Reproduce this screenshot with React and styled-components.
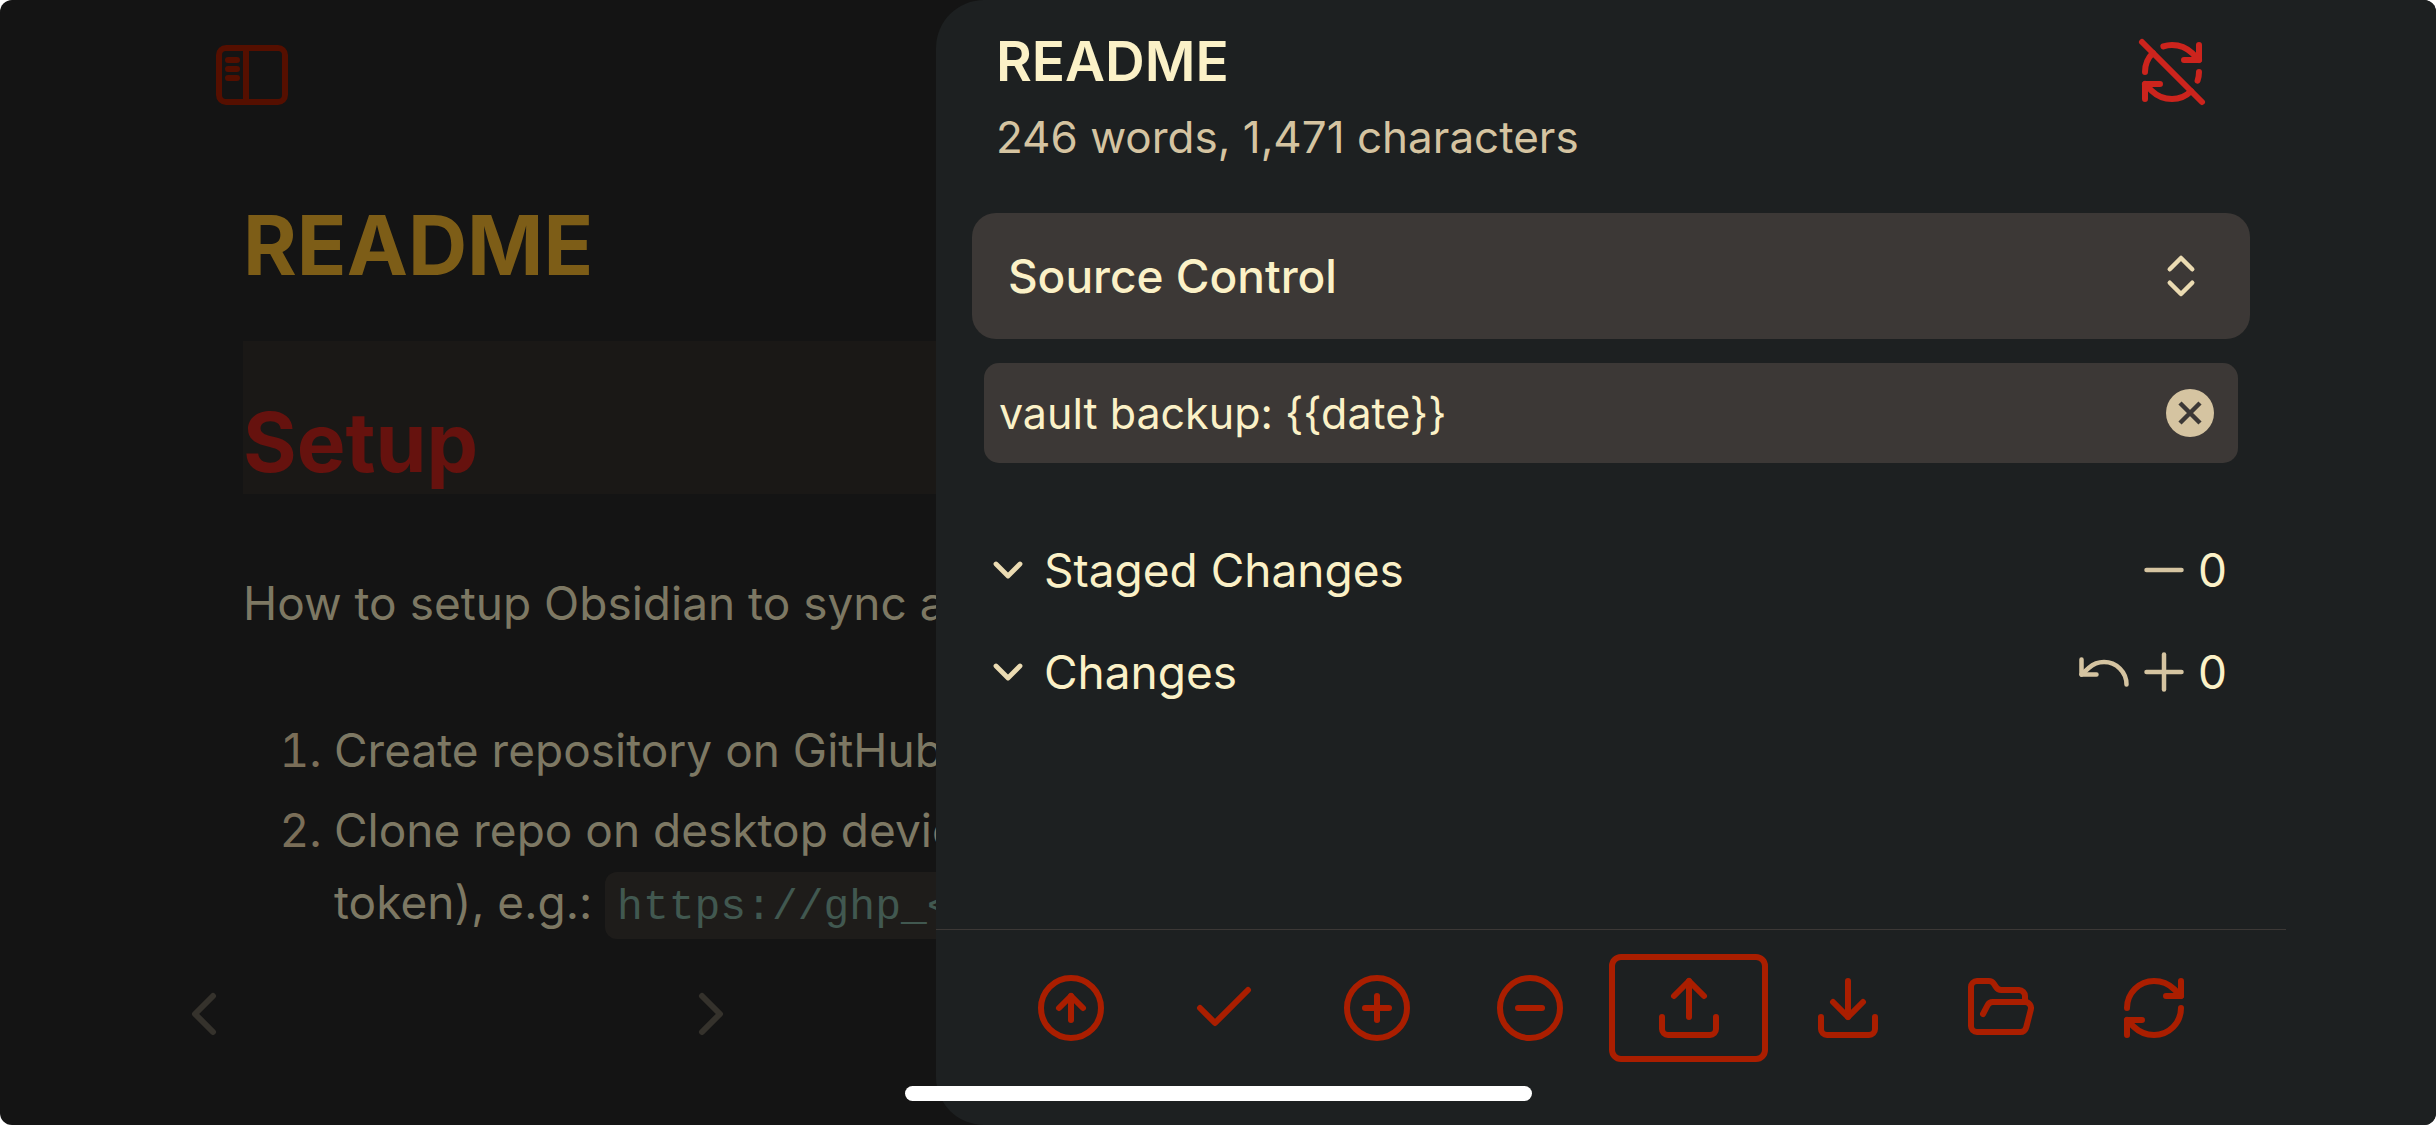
import React, { useState } from "react";
import styled, { createGlobalStyle } from "styled-components";
import {
  Check,
  ChevronDown,
  ChevronLeft,
  ChevronRight,
  ChevronsUpDown,
  CircleArrowUp,
  CircleMinus,
  CirclePlus,
  Download,
  FolderOpen,
  Minus,
  Plus,
  RefreshCw,
  RefreshCwOff,
  Undo,
  Upload,
} from "lucide-react";

const GlobalStyle = createGlobalStyle`
  * { box-sizing: border-box; }
  html { background: #ffffff; }
  body { margin: 0; font-family: Inter, "Liberation Sans", sans-serif; }
  h1, h2, p, ol, ul { margin: 0; padding: 0; font-weight: inherit; }
  button, input, select { font-family: inherit; margin: 0; }
  svg { display: block; flex: none; }
`;

const Screen = styled.div`
  display: flex;
  min-height: 100vh;
  overflow: hidden;
  border-radius: 12px;
  background: #141414;
`;

/* Dimmed note behind the drawer */
const NotePane = styled.main`
  display: flex;
  flex-direction: column;
  width: 38.42%;
  flex: none;
  overflow: hidden;
  white-space: nowrap;
`;

const IconButton = styled.button`
  display: flex;
  align-items: center;
  justify-content: center;
  flex: none;
  padding: 0;
  border: 0;
  background: transparent;
  color: ${(p) => p.$color};
  cursor: pointer;
`;

const NoteHeader = styled.header`
  display: flex;
  padding: 45px 0 0 216px;
`;

const NoteBody = styled.article`
  padding: 91px 0 0 243px;
  font-size: 46px;
  line-height: 72px;
  color: #7d7863;
`;

const NoteTitle = styled.h1`
  font-size: 82px;
  line-height: 100px;
  font-weight: 700;
  color: #7d5d17;
`;

const NoteHeading = styled.h2`
  margin-top: 45px;
  padding-top: 50px;
  font-size: 82px;
  line-height: 103px;
  font-weight: 700;
  color: #66120e;
  background: #1a1816;
`;

const Paragraph = styled.p`
  margin-top: 73px;
`;

const Steps = styled.ol`
  display: grid;
  gap: 8px;
  margin-top: 75px;
  padding-left: 91px;

  li::marker { color: #7a6e58; }
`;

const Code = styled.code`
  padding: 11px 12px 7px;
  border-radius: 12px;
  background: #1e1c1a;
  color: #415850;
  font-family: "Liberation Mono", monospace;
  font-size: 43px;
`;

const NoteNav = styled.nav`
  display: flex;
  justify-content: space-between;
  margin-top: auto;
  padding: 0 189px 75px 168px;
`;

/* Right drawer */
const Drawer = styled.aside`
  display: flex;
  flex-direction: column;
  flex: 1;
  min-width: 0;
  padding-right: 150px;
  border-radius: 48px 0 0 48px;
  background: #1d2021;
`;

const DrawerHeader = styled.header`
  display: flex;
  justify-content: space-between;
  align-items: flex-start;
  padding: 25px 78px 0 60px;
`;

const HeaderText = styled.div`
  display: grid;
  gap: 12px;
`;

const DrawerTitle = styled.h2`
  font-size: 55px;
  line-height: 72px;
  font-weight: 600;
  color: #fbf1c7;
`;

const Stats = styled.p`
  font-size: 44px;
  line-height: 56px;
  color: #d5c4a1;
`;

const SyncButton = styled(IconButton)`
  margin-top: 11px;
`;

const ViewPicker = styled.label`
  display: grid;
  align-items: center;
  margin: 48px 36px 0;
  color: #ebdbb2;

  > * { grid-area: 1 / 1; }

  > svg {
    justify-self: end;
    margin-right: 42px;
    pointer-events: none;
  }
`;

const ViewSelect = styled.select`
  appearance: none;
  width: 100%;
  height: 126px;
  padding: 0 36px;
  border: 0;
  border-radius: 24px;
  background: #3c3836;
  color: #fbf1c7;
  font-size: 46px;
  font-weight: 500;
`;

const MessageField = styled.div`
  display: flex;
  align-items: center;
  height: 100px;
  margin: 24px 48px 0;
  padding: 0 24px 0 15px;
  border-radius: 15px;
  background: #3c3836;
`;

const MessageInput = styled.input`
  flex: 1;
  min-width: 0;
  padding: 0;
  border: 0;
  outline: 0;
  background: transparent;
  color: #fbf1c7;
  font-size: 43px;
  line-height: 56px;
`;

const Groups = styled.ul`
  margin: 56px 59px 0 48px;
  list-style: none;
`;

const Group = styled.li`
  display: flex;
  align-items: center;
  height: 102px;
  color: #fbf1c7;
  font-size: 46px;
`;

const GroupToggle = styled.button`
  display: flex;
  align-items: center;
  gap: 12px;
  margin-right: auto;
  padding: 0;
  border: 0;
  background: transparent;
  color: inherit;
  font-size: inherit;
  cursor: pointer;

  > svg { color: #ebdbb2; }
`;

const Count = styled.span`
  margin-left: 4px;
`;

const Toolbar = styled.div`
  display: flex;
  gap: 6px;
  margin-top: auto;
  padding: 24px 59px 63px 62px;
  border-top: 1px solid #3c3836;
`;

const ToolButton = styled.button`
  display: flex;
  align-items: center;
  justify-content: center;
  flex: 1 1 0;
  height: 108px;
  padding: 0;
  border: ${(p) => (p.$selected ? "6px solid #aa1e00" : "0")};
  border-radius: 12px;
  background: transparent;
  color: #aa1e00;
  cursor: pointer;
`;

const HomeIndicator = styled.div`
  position: fixed;
  bottom: 24px;
  left: 50%;
  width: 627px;
  height: 15px;
  margin-left: -313px;
  border-radius: 8px;
  background: #ffffff;
`;

const SidebarIcon = () => (
  <svg width="72" height="60" viewBox="0 0 72 60" fill="none" stroke="currentColor" strokeWidth="6">
    <rect x="3" y="3" width="66" height="54" rx="7" />
    <path d="M30 3v54" />
    <path d="M12 15h9M12 24h9M12 33h9" strokeLinecap="round" />
  </svg>
);

const ClearIcon = () => (
  <svg width="48" height="48" viewBox="0 0 48 48">
    <circle cx="24" cy="24" r="24" fill="#d5c4a1" />
    <path d="M14 14 34 34M34 14 14 34" stroke="#3c3836" strokeWidth="4.500" />
  </svg>
);

const tools = [
  { label: "Backup", icon: CircleArrowUp },
  { label: "Commit", icon: Check },
  { label: "Stage all", icon: CirclePlus },
  { label: "Unstage all", icon: CircleMinus },
  { label: "Push", icon: Upload },
  { label: "Pull", icon: Download },
  { label: "Change layout", icon: FolderOpen },
  { label: "Refresh", icon: RefreshCw },
];

const groups = [
  { name: "Staged Changes", count: 0, actions: [{ label: "Unstage", icon: Minus }] },
  {
    name: "Changes",
    count: 0,
    actions: [
      { label: "Discard", icon: Undo },
      { label: "Stage", icon: Plus },
    ],
  },
];

export default function App() {
  const [message, setMessage] = useState("vault backup: {{date}}");
  const [selected, setSelected] = useState("Push");

  return (
    <>
      <GlobalStyle />
      <Screen>
        <NotePane>
          <NoteHeader>
            <IconButton $color="#550f00" aria-label="Toggle sidebar">
              <SidebarIcon />
            </IconButton>
          </NoteHeader>
          <NoteBody>
            <NoteTitle>README</NoteTitle>
            <NoteHeading>Setup</NoteHeading>
            <Paragraph>How to setup Obsidian to sync a</Paragraph>
            <Steps>
              <li>Create repository on GitHub</li>
              <li>
                Clone repo on desktop devic
                <br />
                token), e.g.: <Code>https://ghp_&lt;</Code>
              </li>
            </Steps>
          </NoteBody>
          <NoteNav>
            <IconButton $color="#35322c" aria-label="Back">
              <ChevronLeft size={72} />
            </IconButton>
            <IconButton $color="#35322c" aria-label="Forward">
              <ChevronRight size={72} />
            </IconButton>
          </NoteNav>
        </NotePane>

        <Drawer>
          <DrawerHeader>
            <HeaderText>
              <DrawerTitle>README</DrawerTitle>
              <Stats>246 words, 1,471 characters</Stats>
            </HeaderText>
            <SyncButton $color="#cc241d" aria-label="Sync off">
              <RefreshCwOff size={72} />
            </SyncButton>
          </DrawerHeader>

          <ViewPicker>
            <ViewSelect aria-label="View" defaultValue="Source Control">
              <option>Source Control</option>
            </ViewSelect>
            <ChevronsUpDown size={54} />
          </ViewPicker>

          <MessageField>
            <MessageInput
              aria-label="Commit message"
              value={message}
              onChange={(e) => setMessage(e.target.value)}
            />
            <IconButton aria-label="Clear message" onClick={() => setMessage("")}>
              <ClearIcon />
            </IconButton>
          </MessageField>

          <Groups>
            {groups.map((group) => (
              <Group key={group.name}>
                <GroupToggle>
                  <ChevronDown size={48} strokeWidth={2.4} />
                  {group.name}
                </GroupToggle>
                {group.actions.map(({ label, icon: Icon }) => (
                  <IconButton key={label} $color="#d5c4a1" aria-label={label}>
                    <Icon size={60} strokeWidth={1.8} />
                  </IconButton>
                ))}
                <Count>{group.count}</Count>
              </Group>
            ))}
          </Groups>

          <Toolbar>
            {tools.map(({ label, icon: Icon }) => (
              <ToolButton
                key={label}
                aria-label={label}
                $selected={selected === label}
                onClick={() => setSelected(label)}
              >
                <Icon size={72} />
              </ToolButton>
            ))}
          </Toolbar>
        </Drawer>
      </Screen>
      <HomeIndicator />
    </>
  );
}
